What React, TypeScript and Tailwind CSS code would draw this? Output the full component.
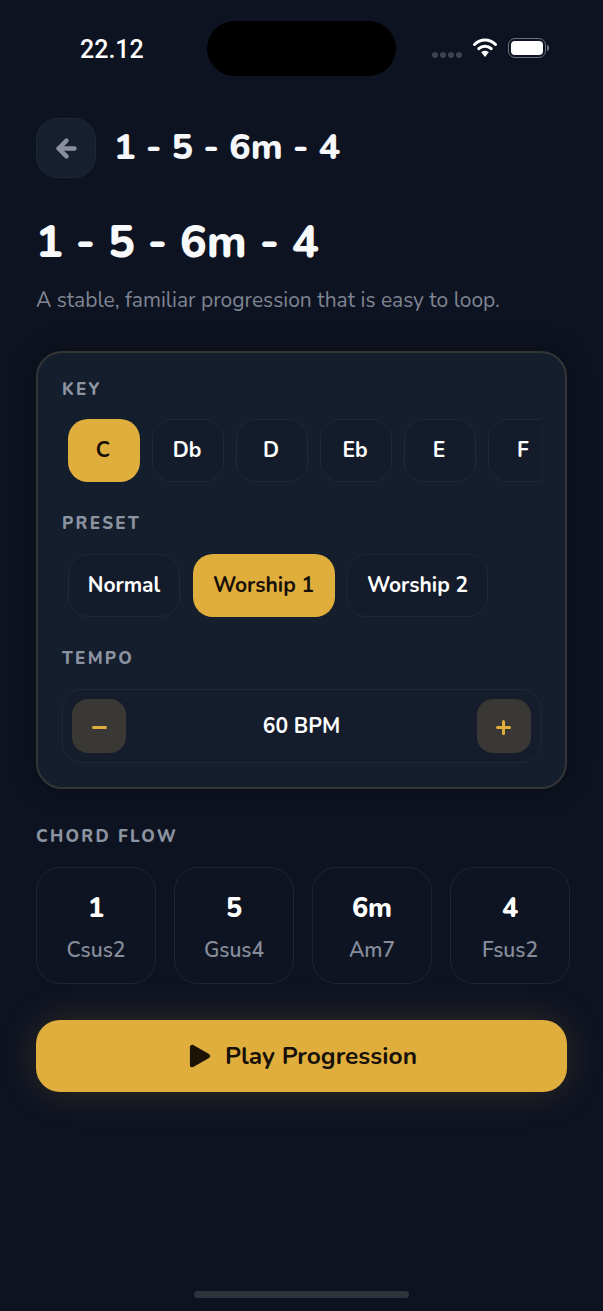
import { ArrowLeft } from "lucide-react";

const keys = ["C", "Db", "D", "Eb", "E", "F"];
const presets = [
  { name: "Normal", width: "w-[112px]" },
  { name: "Worship 1", width: "w-[142px]" },
  { name: "Worship 2", width: "w-[141px]" },
];
const chords = [
  { degree: "1", name: "Csus2" },
  { degree: "5", name: "Gsus4" },
  { degree: "6m", name: "Am7" },
  { degree: "4", name: "Fsus2" },
];

const font = "font-['Nunito','Noto_Sans','Open_Sans',sans-serif]";

const StatusBar = () => (
  <div className="flex h-[55px] items-center mt-[21px]">
    <div className="w-[207px] pl-[80px] font-['Roboto',sans-serif] text-[25px] leading-none font-medium text-white pt-[2px]">22.12</div>
    <div className="h-[55px] w-[189px] rounded-[28px] bg-black" />
    <div className="flex items-center pl-[36px]">
      <div className="flex gap-[2px] mt-[12px]">
        <span className="size-[6px] rounded-full bg-[#3d4250]" />
        <span className="size-[6px] rounded-full bg-[#3d4250]" />
        <span className="size-[6px] rounded-full bg-[#3d4250]" />
        <span className="size-[6px] rounded-full bg-[#3d4250]" />
      </div>
      <svg className="ml-[10px] mb-[2px]" width="26" height="21" viewBox="0 0 25 21" fill="none">
        <path d="M2 7.5C8 1.5 17 1.5 23 7.5" stroke="white" strokeWidth="3" strokeLinecap="round" />
        <path d="M6.3 11.7C9.8 8.3 15.2 8.3 18.7 11.7" stroke="white" strokeWidth="3" strokeLinecap="round" />
        <path d="M8.7 15.2L12.5 20L16.3 15.2C14 13.4 11 13.4 8.7 15.2Z" fill="white" />
      </svg>
      <div className="ml-[10px] mb-[1px] flex items-center">
        <div className="flex h-[20px] w-[38px] items-center justify-center rounded-[7px] border-[1.5px] border-[#6b6f78]">
          <div className="h-[14px] w-[32px] rounded-[4px] bg-white" />
        </div>
        <div className="ml-[1px] h-[6px] w-[2px] rounded-r-full bg-[#6b6f78]" />
      </div>
    </div>
  </div>
);

const Label = ({ children }: { children: string }) => (
  <div className="text-[17px] leading-[22px] font-extrabold tracking-[2.3px] text-[#8c93a1]">{children}</div>
);

const App = () => {
  return (
    <main className={`${font} relative flex h-[1311px] w-[603px] flex-col overflow-hidden bg-[#0e1321]`}>
      <StatusBar />

      <div className="flex flex-col px-[36px]">
        <div className="mt-[42px] flex items-center gap-[18px]">
          <button className="flex h-[60px] w-[60px] items-center justify-center rounded-[22px] border border-[#1f2936] bg-[#151f2d] text-[#8b90a0]">
            <ArrowLeft size={27} strokeWidth={4} />
          </button>
          <h2 className="text-[36px] leading-[44px] font-extrabold text-[#f5f7fa]">1 - 5 - 6m - 4</h2>
        </div>

        <h1 className="mt-[36px] text-[45px] leading-[58px] font-extrabold text-[#f7f9fb]">1 - 5 - 6m - 4</h1>
        <p className="mt-[14px] text-[21px] leading-[28px] text-[#7f8592]">A stable, familiar progression that is easy to loop.</p>

        <section className="mt-[37px] h-[438px] rounded-[26px] border-2 border-[#333536] bg-[#151e2c] px-[24px] pt-[26px] shadow-[0_0_24px_rgba(0,0,0,0.35)]">
          <Label>KEY</Label>
          <div className="mt-[18px] flex w-[479px] gap-[12px] overflow-hidden pl-[6px]">
            {keys.map((k) => (
              <button
                key={k}
                className={
                  k === "C"
                    ? "flex h-[63px] w-[72px] shrink-0 items-center justify-center rounded-[20px] bg-[#e0ae3d] pr-[2px] text-[21px] font-bold text-[#17110a]"
                    : "flex h-[63px] w-[72px] shrink-0 items-center justify-center rounded-[20px] border border-[#1f2836] bg-[#141c2b] pr-[2px] text-[21px] font-bold text-white"
                }
              >
                {k}
              </button>
            ))}
          </div>

          <div className="mt-[31px]">
            <Label>PRESET</Label>
          </div>
          <div className="mt-[19px] flex gap-[12.5px] pl-[6px]">
            {presets.map((p) => (
              <button
                key={p.name}
                className={
                  p.name === "Worship 1"
                    ? `${p.width} flex h-[63px] items-center justify-center rounded-[20px] bg-[#e0ae3d] text-[21px] font-bold text-[#17110a]`
                    : `${p.width} flex h-[63px] items-center justify-center rounded-[20px] border border-[#1f2836] bg-[#141c2b] text-[21px] font-bold text-white`
                }
              >
                {p.name}
              </button>
            ))}
          </div>

          <div className="mt-[31px]">
            <Label>TEMPO</Label>
          </div>
          <div className="mt-[19px] flex h-[74px] w-[479px] items-center justify-between rounded-[20px] border border-[#1f2836] bg-[#151d2c] px-[9px]">
            <button className="flex size-[54px] items-center justify-center rounded-[16px] bg-[#393835] pt-[2px]">
              <span className="h-[3px] w-[15px] rounded-full bg-[#e0ae3d]" />
            </button>
            <span className="pt-[2px] text-[21px] font-bold text-white">60 BPM</span>
            <button className="relative flex size-[54px] items-center justify-center rounded-[16px] bg-[#393835] pt-[2px]">
              <span className="h-[3px] w-[15px] rounded-full bg-[#e0ae3d]" />
              <span className="absolute h-[15px] w-[3px] rounded-full bg-[#e0ae3d]" />
            </button>
          </div>
        </section>

        <div className="mt-[37px]">
          <Label>CHORD FLOW</Label>
        </div>
        <div className="mt-[19px] flex w-[534px] gap-[18px]">
          {chords.map((c) => (
            <div key={c.degree} className="flex h-[117px] w-[120px] shrink-0 flex-col items-center rounded-[24px] border border-[#1c2636] bg-[#0e1421] pt-[23px]">
              <div className="text-[27px] leading-[36px] font-extrabold text-white">{c.degree}</div>
              <div className="mt-[9px] text-[21px] leading-[28px] font-semibold text-[#868c9a]">{c.name}</div>
            </div>
          ))}
        </div>

        <button className="mt-[36px] flex h-[72px] items-center justify-center gap-[14px] rounded-[24px] bg-[#e0ae3d] pl-[3px] text-[24.5px] font-bold text-[#17110a] shadow-[0_0_40px_rgba(224,174,61,0.16)]">
          <svg width="22" height="24" viewBox="0 0 24 25" preserveAspectRatio="none" fill="#1c1206">
            <path d="M1 3.5C1 1 3.2 0 5.2 1.2L21.8 10.4C23.6 11.4 23.6 13.6 21.8 14.6L5.2 23.8C3.2 25 1 24 1 21.5Z" />
          </svg>
          Play Progression
        </button>
      </div>

      <div className="mt-auto mb-[13px] h-[7px] w-[215px] self-center rounded-full bg-[#2f333b]" />
    </main>
  );
};

export default App;
